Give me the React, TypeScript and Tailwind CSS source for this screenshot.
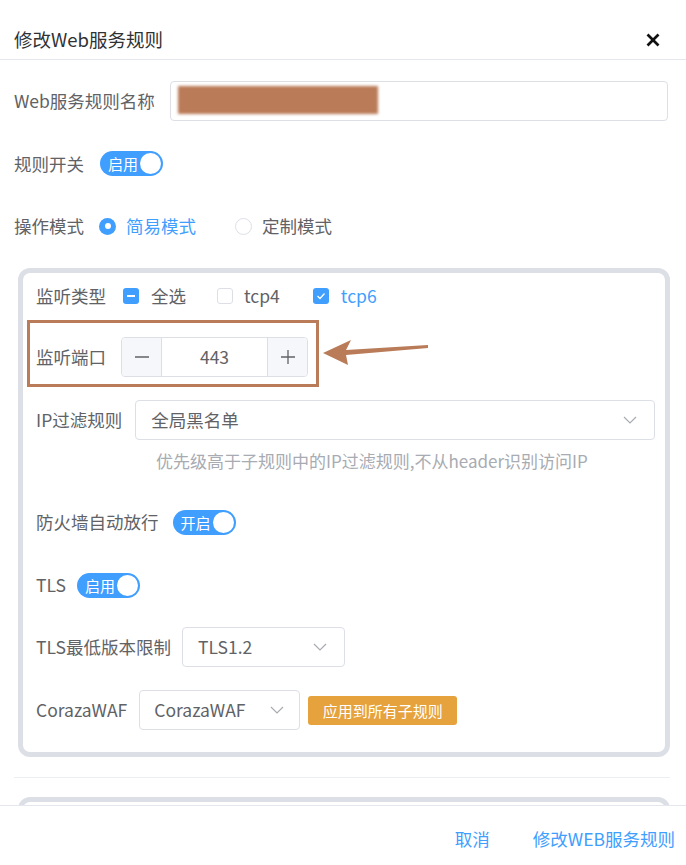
import React from "react";

function Switch({ text }: { text: string }) {
  return (
    <div className="flex h-[25px] w-[63px] shrink-0 items-center rounded-full bg-[#409eff] pl-[8px] pr-[2px]">
      <span className="text-[15px] leading-none text-white">{text}</span>
      <span className="ml-auto h-[21px] w-[21px] rounded-full bg-white" />
    </div>
  );
}

function Chevron() {
  return (
    <svg width="14" height="8" viewBox="0 0 14 8" className="shrink-0">
      <polyline points="1,1 7,7 13,1" fill="none" stroke="#a8abb2" strokeWidth="1.2" />
    </svg>
  );
}

function CheckBox({ state }: { state: "on" | "off" | "ind" }) {
  if (state === "off")
    return <span className="h-[16px] w-[16px] shrink-0 rounded-[3px] border border-[#dcdfe6] bg-white" />;
  return (
    <span className="flex h-[16px] w-[16px] shrink-0 items-center justify-center rounded-[3px] bg-[#409eff]">
      {state === "ind" ? (
        <span className="h-[2px] w-[8px] bg-white" />
      ) : (
        <svg width="10" height="8" viewBox="0 0 10 8">
          <polyline points="1.5,4 4,6.5 8.5,1.5" fill="none" stroke="#fff" strokeWidth="1.3" />
        </svg>
      )}
    </span>
  );
}

export default function App() {
  return (
    <div className="flex h-[865px] w-[686px] flex-col overflow-hidden bg-white font-['Noto_Sans_CJK_SC','Noto_Sans',sans-serif] text-[17.5px] text-[#606266]">
      {/* header */}
      <div className="flex h-[60px] shrink-0 items-start justify-between border-b border-[#e4e7ed] pl-[14px] pr-[26px] pt-[24px]">
        <div className="text-[18.5px] leading-[30px] text-[#303133]">修改Web服务规则</div>
        <svg width="14" height="14" viewBox="0 0 14 14" className="mt-[9px]">
          <line x1="1.5" y1="1.5" x2="12.5" y2="12.5" stroke="#111" strokeWidth="2.6" />
          <line x1="12.5" y1="1.5" x2="1.5" y2="12.5" stroke="#111" strokeWidth="2.6" />
        </svg>
      </div>

      {/* body */}
      <div className="flex-1 overflow-hidden pl-[14px] pr-[16px] pt-[21px]">
        <div className="flex h-[40px] items-center">
          <span className="pr-[15px] leading-none">Web服务规则名称</span>
          <div className="relative mr-[2px] h-[40px] flex-1 rounded-[4px] border border-[#dcdfe6]">
            <div className="absolute left-[7px] top-[4px] h-[28px] w-[200px] bg-[#b97b58] blur-[1.5px]" />
          </div>
        </div>

        <div className="mt-[22.5px] flex h-[40px] items-center">
          <span className="pr-[16px] leading-none">规则开关</span>
          <Switch text="启用" />
        </div>

        <div className="mt-[22.5px] flex h-[40px] items-center">
          <span className="pr-[15px] leading-none">操作模式</span>
          <span className="flex h-[17px] w-[17px] items-center justify-center rounded-full bg-[#409eff]">
            <span className="h-[6px] w-[6px] rounded-full bg-white" />
          </span>
          <span className="ml-[10px] leading-none text-[#409eff]">简易模式</span>
          <span className="ml-[39px] h-[17px] w-[17px] rounded-full border border-[#dcdfe6]" />
          <span className="ml-[10px] leading-none">定制模式</span>
        </div>

        {/* card */}
        <div className="ml-[4px] mt-[22px] rounded-[12px] border-[5px] border-[#dcdfe6] pb-[22px] pl-[13px] pt-[3px]">
          <div className="flex h-[40px] items-center">
            <span className="pr-[17px] leading-none">监听类型</span>
            <CheckBox state="ind" />
            <span className="ml-[12px] leading-none">全选</span>
            <span className="ml-[31px]" />
            <CheckBox state="off" />
            <span className="ml-[11px] leading-none">tcp4</span>
            <span className="ml-[33px]" />
            <CheckBox state="on" />
            <span className="ml-[12px] leading-none text-[#409eff]">tcp6</span>
          </div>

          <div className="relative mt-[21px] flex h-[40px] items-center">
            <div className="pointer-events-none absolute left-[-9px] top-[-17px] h-[67px] w-[292px] border-[3px] border-[#b97b58]" />
            <svg
              width="112"
              height="32"
              viewBox="0 0 112 32"
              className="absolute left-[284px] top-[-2px]"
            >
              <polygon
                points="3,18 31,5 26,15 108,10 108,13 26,20 28,30"
                fill="#b97b58"
              />
            </svg>
            <span className="pr-[15px] leading-none">监听端口</span>
            <div className="flex h-[40px] w-[187px] overflow-hidden rounded-[4px] border border-[#dcdfe6]">
              <div className="flex w-[40px] items-center justify-center border-r border-[#dcdfe6] bg-[#f5f7fa]">
                <svg width="16" height="16" viewBox="0 0 16 16">
                  <line x1="1" y1="8" x2="15" y2="8" stroke="#606266" strokeWidth="1.3" />
                </svg>
              </div>
              <div className="flex flex-1 items-center justify-center leading-none">443</div>
              <div className="flex w-[40px] items-center justify-center border-l border-[#dcdfe6] bg-[#f5f7fa]">
                <svg width="16" height="16" viewBox="0 0 16 16">
                  <line x1="1" y1="8" x2="15" y2="8" stroke="#606266" strokeWidth="1.3" />
                  <line x1="8" y1="1" x2="8" y2="15" stroke="#606266" strokeWidth="1.3" />
                </svg>
              </div>
            </div>
          </div>

          <div className="mt-[23px] flex h-[40px] items-center">
            <span className="pr-[13px] leading-none">IP过滤规则</span>
            <div className="flex h-[40px] w-[520px] items-center justify-between rounded-[4px] border border-[#dcdfe6] pl-[15px] pr-[17px]">
              <span className="leading-none">全局黑名单</span>
              <Chevron />
            </div>
          </div>

          <div className="ml-[120px] mt-[9px] h-[24px] text-[17px] leading-[24px] text-[#a8abb2]">
            优先级高于子规则中的IP过滤规则,不从header识别访问IP
          </div>

          <div className="mt-[29px] flex h-[40px] items-center">
            <span className="pr-[14px] leading-none">防火墙自动放行</span>
            <Switch text="开启" />
          </div>

          <div className="mt-[23px] flex h-[40px] items-center">
            <span className="pr-[11px] leading-none">TLS</span>
            <Switch text="启用" />
          </div>

          <div className="mt-[22px] flex h-[40px] items-center">
            <span className="pr-[11px] leading-none">TLS最低版本限制</span>
            <div className="flex h-[40px] w-[163px] items-center justify-between rounded-[4px] border border-[#dcdfe6] pl-[15px] pr-[17px]">
              <span className="leading-none">TLS1.2</span>
              <Chevron />
            </div>
          </div>

          <div className="mt-[23px] flex h-[40px] items-center">
            <span className="pr-[12px] leading-none">CorazaWAF</span>
            <div className="flex h-[40px] w-[161px] items-center justify-between rounded-[4px] border border-[#dcdfe6] pl-[14px] pr-[15px]">
              <span className="leading-none">CorazaWAF</span>
              <Chevron />
            </div>
            <div className="ml-[8px] flex h-[29px] w-[149px] items-center justify-center rounded-[3px] bg-[#e6a23c] text-[15px] leading-none text-white">
              应用到所有子规则
            </div>
          </div>
        </div>

        <div className="mt-[20px] h-px bg-[#ebeef5]" />

        <div className="ml-[4px] mt-[19px] h-[200px] rounded-[12px] border-[5px] border-[#dcdfe6]" />
      </div>

      {/* footer */}
      <div className="flex h-[60px] shrink-0 items-center justify-end gap-[43px] border-t border-[#e4e7ed] pr-[11px] pt-[6px] text-[#409eff]">
        <span className="leading-none">取消</span>
        <span className="leading-none">修改WEB服务规则</span>
      </div>
    </div>
  );
}
